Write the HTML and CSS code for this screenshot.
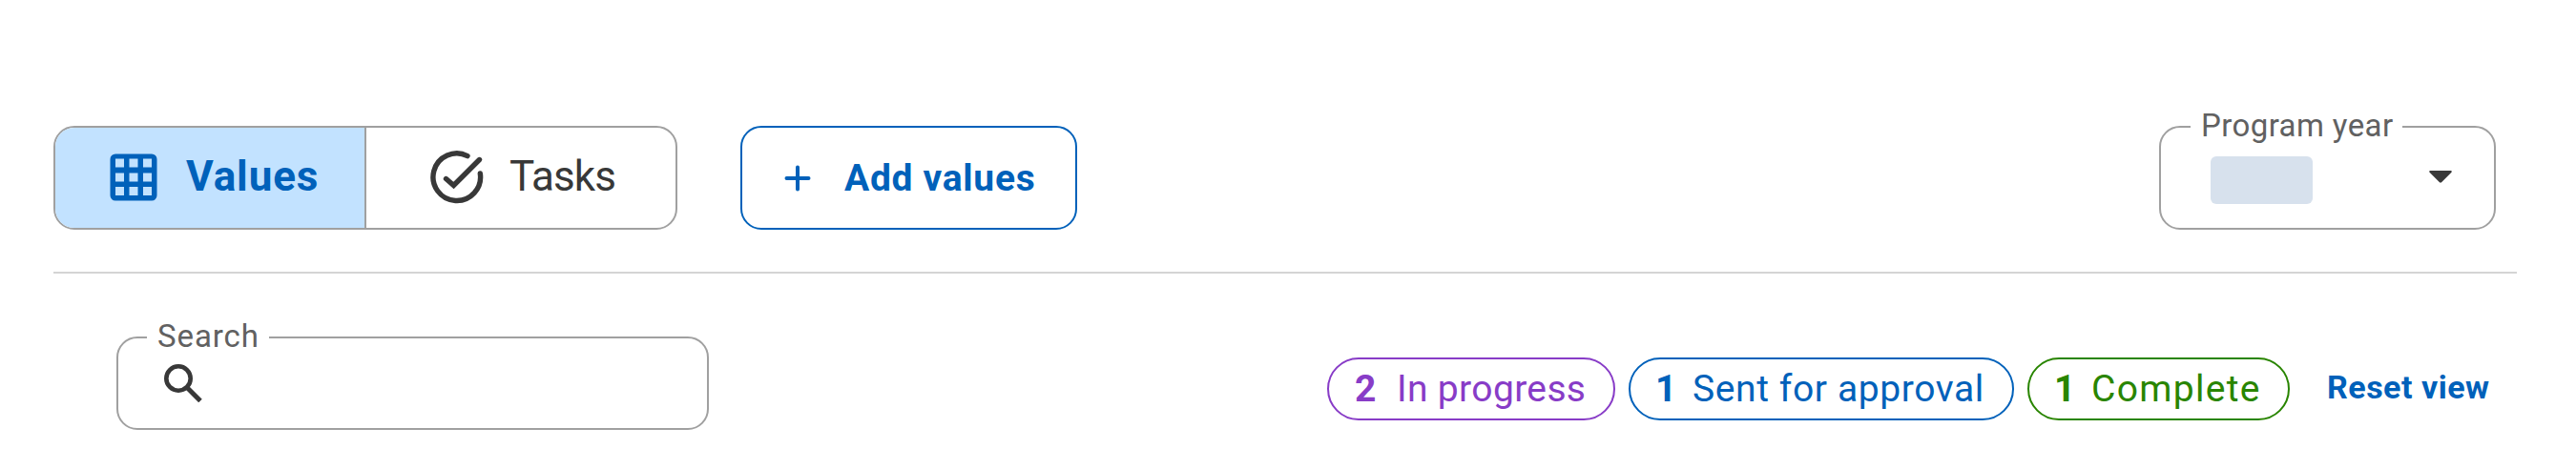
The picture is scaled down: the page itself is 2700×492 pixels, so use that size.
FILE: index.html
```
<!DOCTYPE html>
<html lang="en">
<head>
<meta charset="utf-8">
<title>Values</title>
<link rel="stylesheet" href="styles.css">
</head>
<body>
<div class="page">
  <div class="toolbar">
    <div class="tabs">
      <button class="tab active">
        <svg width="50" height="50" viewBox="0 0 50 50">
          <path fill="currentColor" fill-rule="evenodd" d="M6 .5h38a5.500 5.500 0 0 1 5.500 5.500v38a5.500 5.500 0 0 1-5.500 5.500H6A5.500 5.500 0 0 1 .5 44V6A5.500 5.500 0 0 1 6 .5zM6 5.500v9h9v-9zM20.500 5.500v9h9v-9zM35 5.500v9h9v-9zM6 20.500v9h9v-9zM20.500 20.500v9h9v-9zM35 20.500v9h9v-9zM6 35v9h9v-9zM20.500 35v9h9v-9zM35 35v9h9v-9z"/>
        </svg>
        <span>Values</span>
      </button>
      <button class="tab">
        <svg width="56" height="56" viewBox="0 0 56 56" fill="none" stroke="currentColor" stroke-width="5.400" stroke-linecap="round">
          <path d="M39 5.600A24.800 24.800 0 1 0 52.300 24"/>
          <path d="M16.500 29.500L24.500 36.500L51.500 9.500" stroke-linejoin="miter"/>
        </svg>
        <span>Tasks</span>
      </button>
    </div>
    <button class="add">
      <svg width="28" height="28" viewBox="0 0 28 28" stroke="currentColor" stroke-width="4" stroke-linecap="round">
        <path d="M14 2.500v23M2.500 14h23"/>
      </svg>
      <span>Add values</span>
    </button>
    <fieldset class="field year">
      <legend>Program year</legend>
      <div class="year-row">
        <span class="blank"></span>
        <svg width="24" height="13" viewBox="0 0 24 13">
          <path fill="#383838" d="M1.200 0h21.600a1 1 0 0 1 .7 1.700L13 12.200a1.500 1.500 0 0 1-2 0L.5 1.700A1 1 0 0 1 1.200 0z"/>
        </svg>
      </div>
    </fieldset>
  </div>
  <div class="filters">
    <fieldset class="field search">
      <legend>Search</legend>
      <svg width="40" height="40" viewBox="0 0 40 40" fill="none" stroke="#383838">
        <circle cx="15" cy="15" r="12.700" stroke-width="4.600"/>
        <path d="M24.500 25L38 38.500" stroke-width="5"/>
      </svg>
    </fieldset>
    <div class="pills">
      <div class="pill progress"><b>2</b><span>In progress</span></div>
      <div class="pill sent"><b>1</b><span>Sent for approval</span></div>
      <div class="pill complete"><b>1</b><span>Complete</span></div>
    </div>
    <a class="reset">Reset view</a>
  </div>
</div>
</body>
</html>
```

FILE: styles.css
```
* {
  box-sizing: border-box;
}
body {
  margin: 0;
  background: #fff;
  color: #383838;
  font-family: Roboto, "Liberation Sans", sans-serif;
}
button {
  margin: 0;
  background: none;
  border: none;
  font-family: inherit;
  color: inherit;
  cursor: pointer;
}
svg {
  display: block;
  flex: none;
}
.page {
  width: 2582px;
  margin-left: 56px;
  padding-top: 132px;
}
/* top row */
.toolbar {
  display: flex;
  align-items: flex-start;
  height: 155px;
  padding-right: 22px;
  border-bottom: 2px solid #d4d4d4;
}
.tabs {
  display: flex;
  width: 654px;
  height: 109px;
  border: 2px solid #a0a0a0;
  border-radius: 22px;
  overflow: hidden;
}
.tab {
  display: flex;
  align-items: center;
  flex: 1;
  gap: 27px;
  padding: 0 0 2px 67px;
  font-size: 44px;
  letter-spacing: -0.900px;
}
.tab span {
  padding-bottom: 2px;
  line-height: 52px;
}
.tab.active {
  flex: 0 0 326px;
  gap: 30px;
  padding: 0 0 2px 57px;
  border-right: 2px solid #a0a0a0;
  background: #c2e2ff;
  color: #0061ba;
  font-weight: bold;
  letter-spacing: 0.900px;
}
.add {
  display: flex;
  align-items: center;
  gap: 35px;
  width: 353px;
  height: 109px;
  margin-left: 66px;
  padding: 0 0 0 44px;
  border: 2px solid #0061ba;
  border-radius: 22px;
  color: #0061ba;
  font-size: 39px;
  font-weight: bold;
  letter-spacing: 0.700px;
}
/* outlined field with the label in its border */
.field {
  min-width: 0;
  margin: 0;
  padding: 0;
  border: 2px solid #a0a0a0;
  border-radius: 22px;
}
.field legend {
  height: 38px;
  line-height: 35px;
  font-size: 33px;
  color: #616161;
}
.year {
  width: 353px;
  height: 127px;
  margin: -18px 0 0 auto;
}
.year legend {
  width: 222px;
  margin-left: 31px;
  padding: 0 0 0 11px;
  letter-spacing: 0.400px;
}
.year-row {
  display: flex;
  align-items: center;
  justify-content: space-between;
  padding: 12px 44px 0 52px;
}
.year-row svg {
  margin-bottom: 7px;
}
.blank {
  width: 107px;
  height: 50px;
  border-radius: 6px;
  background: #d7e1ed;
}
/* bottom row */
.filters {
  display: flex;
  align-items: flex-start;
  padding: 48px 0 0 66px;
}
.search {
  width: 621px;
  height: 116px;
}
.search legend {
  width: 128px;
  margin-left: 30px;
  padding: 0 0 0 11px;
  letter-spacing: 0.900px;
}
.search svg {
  margin: 9px 0 0 48px;
}
.pills {
  display: flex;
  gap: 14px;
  margin: 40px 0 0 648px;
}
.pill {
  display: flex;
  align-items: center;
  height: 66px;
  padding: 0 0 1px 27px;
  border: 2px solid;
  border-radius: 33px;
  font-size: 39px;
  white-space: nowrap;
}
.pill b {
  width: 44px;
  line-height: 46px;
}
.pill span {
  line-height: 46px;
}
.progress {
  width: 302px;
  color: #883cc7;
  letter-spacing: 0.350px;
}
.sent {
  width: 404px;
  color: #0061ba;
  letter-spacing: 0.600px;
}
.sent b, .complete b {
  width: 39px;
}
.sent, .complete {
  padding-left: 26px;
}
.complete {
  width: 275px;
  color: #298500;
  letter-spacing: 1.300px;
}
.reset {
  margin: 51px 0 0 39px;
  line-height: 40px;
  color: #0061ba;
  font-size: 34px;
  font-weight: bold;
  letter-spacing: 0.500px;
  white-space: nowrap;
}
```
